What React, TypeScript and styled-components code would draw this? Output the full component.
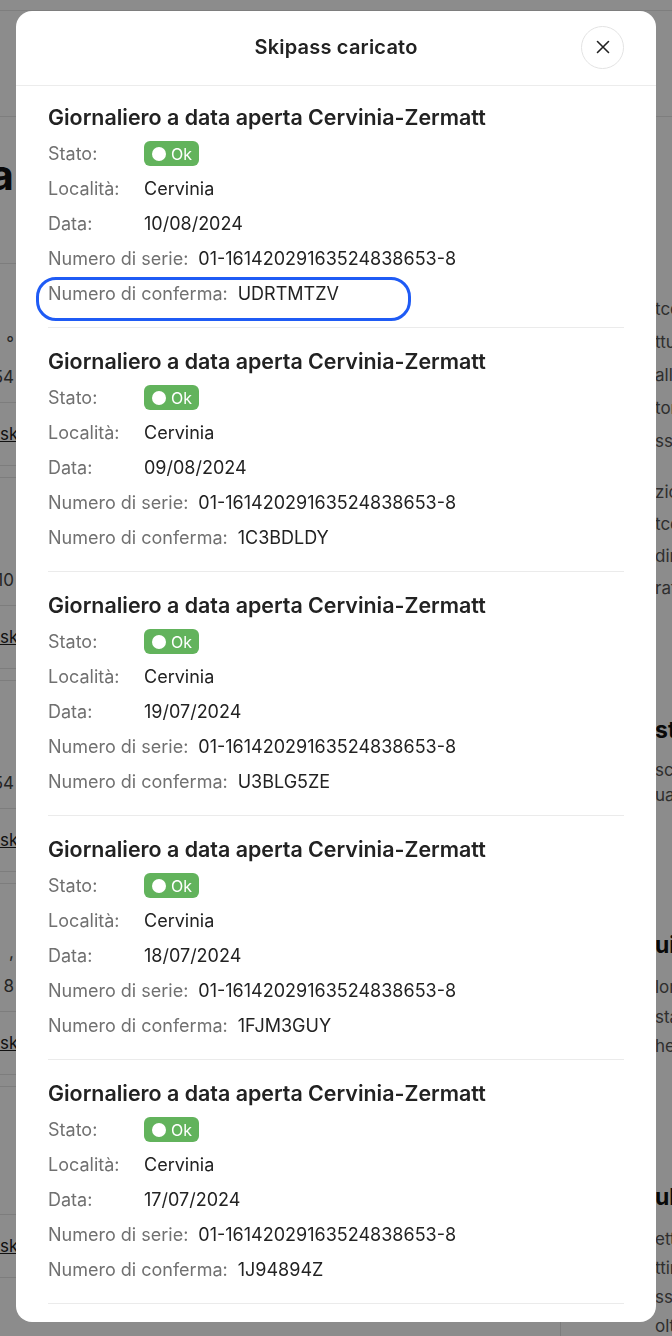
import React from "react";
import styled, { createGlobalStyle } from "styled-components";

const GlobalStyle = createGlobalStyle`
  html, body { margin: 0; padding: 0; }
  body {
    width: 672px;
    height: 1336px;
    overflow: hidden;
    background: #ffffff;
    font-family: Inter, "Noto Sans", Arial, sans-serif;
    -webkit-font-smoothing: antialiased;
  }
  * { box-sizing: border-box; }
`;

/* ---------- background page ---------- */

const Page = styled.div`
  width: 672px;
  height: 1336px;
  overflow: hidden;
  display: flex;
  flex-direction: column;
  color: #333;
`;

const PageTopBar = styled.div`
  height: 11px;
  border-bottom: 1px solid #e6e6e6;
  flex-shrink: 0;
`;

const PageNav = styled.div`
  height: 106px;
  border-bottom: 1px solid #e6e6e6;
  flex-shrink: 0;
`;

const PageBody = styled.div`
  flex: 1;
  display: flex;
`;

const LeftColumn = styled.div`
  width: 561px;
  flex-shrink: 0;
  border-right: 1px solid #e3e3e3;
  display: flex;
  flex-direction: column;
`;

const Tail = styled.div<{ $size?: number; $weight?: number }>`
  width: 14px;
  display: flex;
  justify-content: flex-end;
  white-space: nowrap;
  font-size: ${(p) => p.$size ?? 17}px;
  font-weight: ${(p) => p.$weight ?? 400};
`;

const PageHeading = styled.div`
  height: 146px;
  padding-top: 34px;
  font-size: 42px;
  line-height: 48px;
  color: #111;
`;

const Card = styled.div`
  border-top: 1px solid #e3e3e3;
  border-bottom: 1px solid #e3e3e3;
  margin-bottom: 11px;
  display: flex;
  flex-direction: column;
`;

const CardBody = styled.div<{ $h: number }>`
  height: ${(p) => p.$h}px;
  display: flex;
  flex-direction: column;
  justify-content: flex-end;
  padding-bottom: 8px;
  line-height: 34px;
  color: #444;
`;

const CardFooter = styled.div`
  height: 63px;
  border-top: 1px solid #e3e3e3;
  display: flex;
  align-items: center;
`;

const CardLink = styled.a`
  font-size: 17px;
  color: #222;
  text-decoration: underline;
  white-space: nowrap;
`;

const RightColumn = styled.div`
  flex: 1;
  min-width: 0;
  padding: 176px 0 0 94px;
  display: flex;
  flex-direction: column;
  white-space: nowrap;
  overflow: hidden;
`;

const Para = styled.div<{ $lh: number; $mb: number }>`
  font-size: 17px;
  line-height: ${(p) => p.$lh}px;
  color: #555;
  margin-bottom: ${(p) => p.$mb}px;
`;

const SideHeading = styled.div<{ $mt: number }>`
  font-size: 23px;
  font-weight: 700;
  line-height: 32px;
  color: #111;
  margin-top: ${(p) => p.$mt}px;
  margin-bottom: 12px;
`;

/* ---------- modal ---------- */

const Overlay = styled.div`
  position: fixed;
  inset: 0;
  background: rgba(0, 0, 0, 0.45);
  display: flex;
  justify-content: center;
  align-items: flex-start;
  padding-top: 11px;
`;

const Modal = styled.div`
  width: 640px;
  height: 1311px;
  background: #ffffff;
  border-radius: 16px;
  overflow: hidden;
  display: flex;
  flex-direction: column;
`;

const ModalHeader = styled.div`
  height: 75px;
  flex-shrink: 0;
  border-bottom: 1px solid #ececec;
  display: grid;
  grid-template-columns: 1fr auto 1fr;
  align-items: center;
  padding: 0 32px 2px;
`;

const ModalTitle = styled.h2`
  grid-column: 2;
  margin: 0;
  font-size: 20px;
  letter-spacing: 0.2px;
  font-weight: 600;
  color: #222;
`;

const CloseButton = styled.button`
  grid-column: 3;
  justify-self: end;
  width: 43px;
  height: 43px;
  border-radius: 50%;
  border: 1px solid #e3e3e3;
  background: #fff;
  display: flex;
  align-items: center;
  justify-content: center;
  padding: 0;
  color: #222;
  cursor: pointer;
`;

const ModalBody = styled.div`
  flex: 1;
  overflow: hidden;
  padding: 0 32px 17px;
`;

const Item = styled.div`
  border-bottom: 1px solid #ebebeb;
  padding: 19px 0 16px;
  &:first-child {
    padding-top: 17px;
  }
`;

const ItemTitle = styled.h3`
  margin: 0 0 5px;
  font-size: 21.4px;
  line-height: 28px;
  font-weight: 600;
  color: #222;
  white-space: nowrap;
`;

const Row = styled.div<{ $focused?: boolean }>`
  position: relative;
  display: flex;
  align-items: center;
  height: 35px;
  font-size: 18px;
  white-space: nowrap;
  ${(p) =>
    p.$focused
      ? `
    &::after {
      content: "";
      position: absolute;
      left: -12px;
      top: 1px;
      width: 369px;
      height: 38px;
      border: 3px solid #1f5bf5;
      border-radius: 20px;
    }
  `
      : ""}
`;

const Label = styled.span`
  min-width: 86px;
  margin-right: 10px;
  color: #707070;
`;

const Value = styled.span`
  color: #222;
`;

const Badge = styled.span`
  display: inline-flex;
  align-items: center;
  gap: 5px;
  height: 25px;
  padding: 0 7px 0 8px;
  border-radius: 6px;
  background: #62b35c;
  color: #fff;
  font-size: 16px;
`;

const Dot = styled.span`
  width: 14px;
  height: 14px;
  border-radius: 50%;
  background: #fff;
`;

const passes = [
  { date: "10/08/2024", code: "UDRTMTZV" },
  { date: "09/08/2024", code: "1C3BDLDY" },
  { date: "19/07/2024", code: "U3BLG5ZE" },
  { date: "18/07/2024", code: "1FJM3GUY" },
  { date: "17/07/2024", code: "1J94894Z" },
];

const cards = [
  { h: 138, small: "°", value: "€ 54" },
  { h: 127, small: "", value: "10" },
  { h: 127, small: "", value: "€ 54" },
  { h: 127, small: ",", value: "8" },
  { h: 127, small: "", value: "" },
];

export default function App() {
  return (
    <>
      <GlobalStyle />
      <Page>
        <PageTopBar />
        <PageNav />
        <PageBody>
          <LeftColumn>
            <PageHeading>
              <Tail $size={42} $weight={700}>Ricarica</Tail>
            </PageHeading>
            {cards.map((c, i) => (
              <Card key={i}>
                <CardBody $h={c.h}>
                  <Tail>{c.small || "\u00a0"}</Tail>
                  <Tail>{c.value || "\u00a0"}</Tail>
                </CardBody>
                <CardFooter>
                  <CardLink>skipass</CardLink>
                </CardFooter>
              </Card>
            ))}
          </LeftColumn>
          <RightColumn>
            <Para $lh={33} $mb={18}>
              tcome
              <br />
              ttura
              <br />
              alla
              <br />
              tore
              <br />
              ssione
            </Para>
            <Para $lh={32} $mb={0}>
              zione
              <br />
              tcome
              <br />
              dire
              <br />
              rato
            </Para>
            <SideHeading $mt={110}>stato</SideHeading>
            <Para $lh={25} $mb={0}>
              scelta
              <br />
              uale
            </Para>
            <SideHeading $mt={121}>uista</SideHeading>
            <Para $lh={29.5} $mb={0}>
              lora
              <br />
              stato
              <br />
              heck
            </Para>
            <SideHeading $mt={119}>ulteriori</SideHeading>
            <Para $lh={29} $mb={0}>
              etto
              <br />
              ttimo
              <br />
              ssione
              <br />
              oltre
            </Para>
          </RightColumn>
        </PageBody>
      </Page>

      <Overlay>
        <Modal role="dialog" aria-label="Skipass caricato">
          <ModalHeader>
            <ModalTitle>Skipass caricato</ModalTitle>
            <CloseButton aria-label="Chiudi">
              <svg width="16" height="16" viewBox="0 0 16 16" fill="none">
                <path d="M2.5 2.5L13.5 13.5M13.5 2.5L2.5 13.5" stroke="currentColor" strokeWidth="1.6" strokeLinecap="round" />
              </svg>
            </CloseButton>
          </ModalHeader>
          <ModalBody>
            {passes.map((p, i) => (
              <Item key={i}>
                <ItemTitle>Giornaliero a data aperta Cervinia-Zermatt</ItemTitle>
                <Row>
                  <Label>Stato:</Label>
                  <Badge>
                    <Dot />
                    Ok
                  </Badge>
                </Row>
                <Row>
                  <Label>Località:</Label>
                  <Value>Cervinia</Value>
                </Row>
                <Row>
                  <Label>Data:</Label>
                  <Value>{p.date}</Value>
                </Row>
                <Row>
                  <Label>Numero di serie:</Label>
                  <Value>01-16142029163524838653-8</Value>
                </Row>
                <Row $focused={i === 0}>
                  <Label>Numero di conferma:</Label>
                  <Value>{p.code}</Value>
                </Row>
              </Item>
            ))}
          </ModalBody>
        </Modal>
      </Overlay>
    </>
  );
}
